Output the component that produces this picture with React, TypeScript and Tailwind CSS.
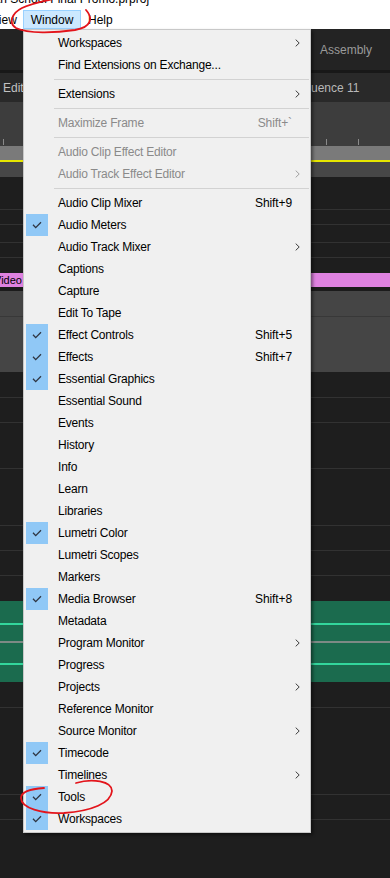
import React from 'react';

type Item = {
  label: string;
  check?: boolean;
  shortcut?: string;
  sub?: boolean;
  disabled?: boolean;
};

const menu: (Item | 'sep')[] = [
  { label: 'Workspaces', sub: true },
  { label: 'Find Extensions on Exchange...' },
  'sep',
  { label: 'Extensions', sub: true },
  'sep',
  { label: 'Maximize Frame', shortcut: 'Shift+`', disabled: true },
  'sep',
  { label: 'Audio Clip Effect Editor', disabled: true },
  { label: 'Audio Track Effect Editor', disabled: true, sub: true },
  'sep',
  { label: 'Audio Clip Mixer', shortcut: 'Shift+9' },
  { label: 'Audio Meters', check: true },
  { label: 'Audio Track Mixer', sub: true },
  { label: 'Captions' },
  { label: 'Capture' },
  { label: 'Edit To Tape' },
  { label: 'Effect Controls', check: true, shortcut: 'Shift+5' },
  { label: 'Effects', check: true, shortcut: 'Shift+7' },
  { label: 'Essential Graphics', check: true },
  { label: 'Essential Sound' },
  { label: 'Events' },
  { label: 'History' },
  { label: 'Info' },
  { label: 'Learn' },
  { label: 'Libraries' },
  { label: 'Lumetri Color', check: true },
  { label: 'Lumetri Scopes' },
  { label: 'Markers' },
  { label: 'Media Browser', check: true, shortcut: 'Shift+8' },
  { label: 'Metadata' },
  { label: 'Program Monitor', sub: true },
  { label: 'Progress' },
  { label: 'Projects', sub: true },
  { label: 'Reference Monitor' },
  { label: 'Source Monitor', sub: true },
  { label: 'Timecode', check: true },
  { label: 'Timelines', sub: true },
  { label: 'Tools', check: true },
  { label: 'Workspaces', check: true },
];

const Check = () => (
  <svg width="10" height="8" viewBox="0 0 10 8">
    <path d="M1 3.8 L3.7 6.6 L9 1.2" fill="none" stroke="#2e3440" strokeWidth="1.3" />
  </svg>
);

const Chevron = ({ dim }: { dim?: boolean }) => (
  <svg width="5" height="8" viewBox="0 0 5 8">
    <path d="M0.7 0.6 L4.2 4 L0.7 7.4" fill="none" stroke={dim ? '#a0a0a0' : '#3c3c3c'} strokeWidth="1" />
  </svg>
);

const MenuRow = ({ item }: { item: Item }) => (
  <div className={`flex h-[22px] items-center ${item.disabled ? 'text-[#8a8a8a]' : 'text-black'}`}>
    <div className={`ml-[2px] flex h-[22px] w-[22px] items-center justify-center ${item.check ? 'bg-[#90c8f6]' : ''}`}>
      {item.check && <Check />}
    </div>
    <span className="ml-[10px] flex-1 whitespace-nowrap tracking-[-0.2px]">{item.label}</span>
    {item.shortcut && <span className="whitespace-nowrap tracking-[-0.1px]">{item.shortcut}</span>}
    <div className="flex w-[18px] items-center pl-[3px]">{item.sub && <Chevron dim={item.disabled} />}</div>
  </div>
);

const Line = () => <div className="h-px bg-[#323232]" />;

const Background = () => (
  <div className="flex flex-col">
    {/* title bar */}
    <div className="h-[8px] overflow-hidden bg-white">
      <div className="-ml-[3px] -mt-[8px] whitespace-nowrap text-[12px] leading-[14px] text-black">
        th School Final Promo.prproj
      </div>
    </div>
    {/* menu bar */}
    <div className="flex h-[21px] items-end bg-white text-[12px] text-black">
      <div className="flex h-[19px] w-[23px] items-center overflow-hidden">
        <span className="-ml-[9px]">View</span>
      </div>
      <div className="flex h-[19px] w-[58px] items-center justify-center border border-[#99d1ff] bg-[#cce8ff]">Window</div>
      <div className="ml-[7px] flex h-[19px] items-center">Help</div>
    </div>

    {/* workspace bar */}
    <div className="flex h-[41px] items-center bg-[#232323] text-[12px] text-[#9a9a9a]">
      <span className="ml-[320px]">Assembly</span>
    </div>
    <div className="h-[3px] bg-[#181818]" />
    <div className="flex h-[29px] items-center bg-[#292929] text-[12px] text-[#c2c2c2]">
      <span className="w-[311px] pl-[3px]">Edit</span>
      <span className="whitespace-nowrap text-[#b8b8b8]">uence 11</span>
    </div>
    {/* ruler */}
    <div className="flex h-[44px] items-end bg-[#3d3d3d] pb-[1px]">
      <div className="ml-[3px] h-[6px] w-px bg-[#8a8a8a]" />
      <div className="ml-[322px] h-[6px] w-px bg-[#8a8a8a]" />
      <div className="ml-[31px] h-[6px] w-px bg-[#8a8a8a]" />
    </div>
    <div className="h-[14px] bg-[#7a7a7a]" />
    <div className="h-[2px] bg-[#e6e600]" />
    <div className="h-[15px] bg-[#474747]" />

    {/* video tracks */}
    <div className="h-[32px] bg-[#1e1e1e]" />
    <Line />
    <div className="h-[14px] bg-[#1e1e1e]" />
    <Line />
    <div className="h-[17px] bg-[#1e1e1e]" />
    <Line />
    <div className="h-[14px] bg-[#1e1e1e]" />
    <Line />
    <div className="h-[15px] bg-[#1e1e1e]" />
    <div className="flex h-[14px] items-center overflow-hidden bg-[#df82e0] text-[11px] text-black">
      <span className="-ml-[6px]">Video</span>
    </div>
    <div className="h-[4px] bg-[#1b1b1b]" />
    <div className="h-[25px] bg-[#454545]" />
    <div className="h-px bg-[#383838]" />
    <div className="h-[55px] bg-[#454545]" />

    {/* audio tracks */}
    <div className="h-[25px] bg-[#1e1e1e]" />
    <Line />
    <div className="h-[24px] bg-[#1e1e1e]" />
    <Line />
    <div className="h-[45px] bg-[#1e1e1e]" />
    <Line />
    <div className="h-[56px] bg-[#1e1e1e]" />
    <Line />
    <div className="h-[24px] bg-[#1e1e1e]" />
    <Line />
    <div className="h-[24px] bg-[#1e1e1e]" />
    <Line />
    <div className="h-[25px] bg-[#1e1e1e]" />

    {/* audio clips */}
    <div className="h-[22px] bg-[#1b6b4e]" />
    <div className="h-[2px] bg-[#33d69c]" />
    <div className="h-[16px] bg-[#1b6b4e]" />
    <div className="h-[2px] bg-[#7d8a85]" />
    <div className="h-[20px] bg-[#1b6b4e]" />
    <div className="h-[2px] bg-[#33d69c]" />
    <div className="h-[17px] bg-[#1b6b4e]" />

    <div className="h-[25px] bg-[#1e1e1e]" />
    <Line />
    <div className="h-[86px] bg-[#1e1e1e]" />
    <Line />
    <div className="h-[24px] bg-[#1e1e1e]" />
    <Line />
    <div className="h-[58px] bg-[#1e1e1e]" />
  </div>
);

export default function App() {
  return (
    <div className="relative h-[878px] w-[390px] overflow-hidden bg-[#1e1e1e] font-['Liberation_Sans',Arial,sans-serif]">
      <Background />

      {/* Window menu */}
      <div className="absolute left-[23px] top-[29px] w-[288px] border border-[#c8c8c8] bg-[#f0f0f0] py-[2px] text-[12px] shadow-[2px_2px_3px_rgba(0,0,0,0.45)]">
        {menu.map((item, i) =>
          item === 'sep' ? (
            <div key={i} className="flex h-[7px] items-center pl-[30px] pr-[1px]">
              <div className="h-px flex-1 bg-[#d2d2d2]" />
            </div>
          ) : (
            <MenuRow key={i} item={item} />
          )
        )}
      </div>

      {/* red annotations */}
      <svg className="pointer-events-none absolute left-0 top-0" width="390" height="878" viewBox="0 0 390 878">
        <path
          d="M86 10 C93 18 92 27 75 30 C55 33 28 34 16 28 C8 23 12 13 22 8 C32 3 45 1 58 -2"
          fill="none"
          stroke="#e3141b"
          strokeWidth="1.8"
          strokeLinecap="round"
        />
        <path
          d="M76 783 C92 778 112 781 112 791 C111 803 92 811 64 813 C42 814 21 808 21 798 C21 792 30 789 44 788"
          fill="none"
          stroke="#e3141b"
          strokeWidth="1.8"
          strokeLinecap="round"
        />
      </svg>
    </div>
  );
}
